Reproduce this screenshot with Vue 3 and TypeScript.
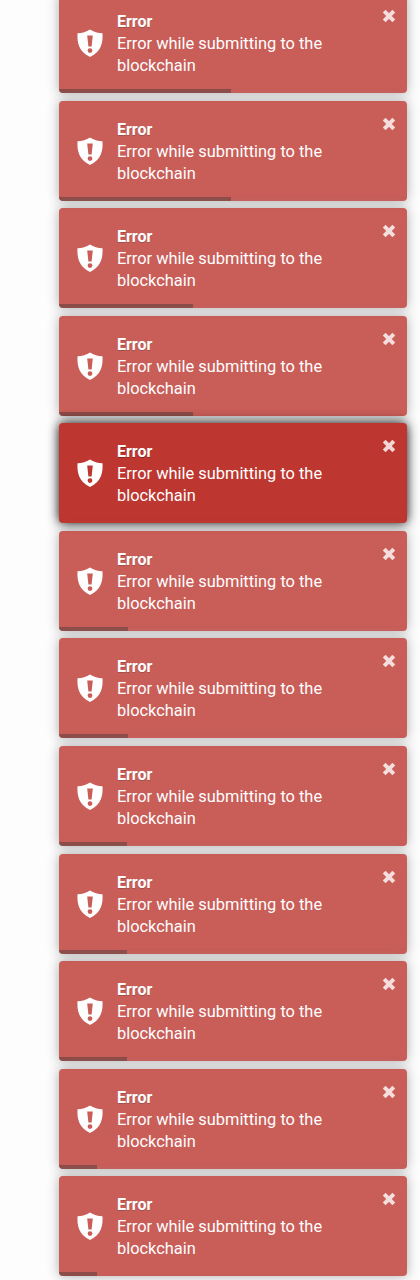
<script setup lang="ts">
interface Toast {
  id: number
  progress: number
  hovered: boolean
}

const widths = [172, 172, 134, 134, 0, 69, 69, 68, 68, 68, 38, 38]
const toasts: Toast[] = widths.map((progress, i) => ({
  id: i,
  progress,
  hovered: i === 4,
}))
</script>

<template>
  <div class="page">
    <div class="stack">
      <div v-for="t in toasts" :key="t.id" class="toast" :class="{ hovered: t.hovered }">
        <svg class="shield" viewBox="0 0 26 28" aria-hidden="true">
          <path
            fill-rule="evenodd"
            d="M13 0.5C16.5 3 21 4 25.5 4.2C26 13 24.5 22.5 13 28C1.5 22.5 0 13 0.5 4.2C5 4 9.5 3 13 0.5ZM10.2 6.5L11.4 17.5H14.6L15.8 6.5ZM13 19.2A2.4 2.4 0 1 0 13 24A2.4 2.4 0 1 0 13 19.2Z"
          />
        </svg>
        <div class="body">
          <div class="title">Error</div>
          <div class="message">Error while submitting to the blockchain</div>
        </div>
        <svg class="close" viewBox="0 0 14 14" aria-hidden="true">
          <path d="M2.2 2.2L11.8 11.8M11.8 2.2L2.2 11.8" />
        </svg>
        <div v-if="t.progress" class="progress" :style="{ width: t.progress + 'px' }"></div>
      </div>
    </div>
  </div>
</template>

<style>
html,
body {
  margin: 0;
  background: #fdfdfd;
}
</style>

<style scoped>
.page {
  height: 1280px;
  overflow: hidden;
  font-family: Roboto, "Liberation Sans", sans-serif;
}
.stack {
  display: flex;
  flex-direction: column;
  gap: 7.57px;
  margin-top: -7px;
  padding-left: 59px;
}
.toast {
  position: relative;
  box-sizing: border-box;
  width: 348px;
  height: 100px;
  flex: none;
  display: flex;
  align-items: center;
  padding: 17px 40px 17px 18px;
  border-radius: 4px;
  color: #fff;
  background: #bd362f;
  opacity: 0.8;
  box-shadow: 0 0 12px #999;
}
.toast.hovered {
  opacity: 1;
  box-shadow: 0 0 12px #000;
}
.shield {
  width: 26px;
  height: 28px;
  flex: none;
  fill: #fff;
}
.body {
  margin-left: 14px;
  padding-top: 2px;
  font-size: 16.4px;
  line-height: 22px;
}
.title {
  font-weight: 700;
  font-size: 16px;
  text-shadow: 0 1px 0 rgba(0, 0, 0, 0.3);
}
.close {
  position: absolute;
  top: 16px;
  right: 11px;
  width: 14px;
  height: 14px;
  fill: none;
  stroke: #fff;
  stroke-width: 4;
  stroke-opacity: 0.8;
}
.progress {
  position: absolute;
  left: 0;
  bottom: 0;
  height: 4px;
  background: #000;
  opacity: 0.4;
  border-bottom-left-radius: 4px;
}
</style>
